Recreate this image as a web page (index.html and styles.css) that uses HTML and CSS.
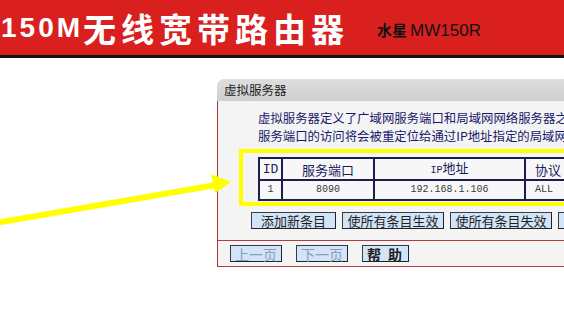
FILE: index.html
```html
<!DOCTYPE html>
<html lang="zh">
<head>
<meta charset="utf-8">
<title>虚拟服务器</title>
<link rel="stylesheet" href="styles.css">
</head>
<body>
<header class="banner">
  <h1 class="brand"><span class="brand-num">150M</span><span class="brand-cn">无线宽带路由器</span></h1>
  <div class="model"><span class="model-cn">水星</span> <span class="model-en">MW150R</span></div>
</header>

<section class="panel">
  <div class="panel-title">虚拟服务器</div>
  <div class="panel-body">
    <p class="desc">虚拟服务器定义了广域网服务端口和局域网网络服务器之间<br>服务端口的访问将会被重定位给通过IP地址指定的局域网网</p>
    <div class="highlight">
      <table class="rules">
        <colgroup>
          <col class="c-id"><col class="c-port"><col class="c-ip"><col class="c-proto">
        </colgroup>
        <tr>
          <th class="mono">ID</th>
          <th>服务端口</th>
          <th><span class="mono">IP</span>地址</th>
          <th>协议</th>
        </tr>
        <tr>
          <td class="mono">1</td>
          <td class="mono">8090</td>
          <td class="mono">192.168.1.106</td>
          <td class="mono">ALL</td>
        </tr>
      </table>
    </div>
    <div class="actions">
      <button class="btn w85">添加新条目</button>
      <button class="btn w102">使所有条目生效</button>
      <button class="btn w102">使所有条目失效</button>
      <button class="btn w102"></button>
    </div>
    <div class="nav">
      <button class="btn nav-btn disabled">上一页</button>
      <button class="btn nav-btn disabled">下一页</button>
      <button class="btn help">帮 助</button>
    </div>
  </div>
</section>

<svg class="arrow" width="564" height="317" viewBox="0 0 564 317">
  <line x1="-10" y1="224" x2="216" y2="185" stroke="#ffff00" stroke-width="6"/>
  <polygon points="211,174 231,182 215,193" fill="#ffff00"/>
</svg>
</body>
</html>
```

FILE: styles.css
```css
html, body {
  margin: 0;
  padding: 0;
}
body {
  width: 564px;
  height: 317px;
  overflow: hidden;
  position: relative;
  background: #ffffff;
  font-family: "Noto Sans CJK SC", "Liberation Sans", sans-serif;
}

.banner {
  height: 55px;
  background: #d9201f;
  border-bottom: 3px solid #111111;
  display: flex;
  align-items: center;
  white-space: nowrap;
}
.brand {
  margin: 0;
  padding-left: 1px;
  color: #ffffff;
  font-weight: bold;
  display: flex;
  align-items: center;
}
.brand-num {
  font-family: "Liberation Sans", sans-serif;
  font-size: 28px;
  letter-spacing: 3px;
  margin-right: 0;
}
.brand-cn {
  font-size: 33px;
  letter-spacing: 5px;
  line-height: 40px;
}
.model {
  margin-left: 28px;
  color: #111111;
  display: flex;
  align-items: baseline;
  padding-top: 4px;
}
.model-cn {
  font-size: 15px;
  font-weight: bold;
  margin-right: 3px;
}
.model-en {
  font-family: "Liberation Sans", sans-serif;
  font-size: 17px;
}

.panel {
  margin: 21px 0 0 217px;
  width: 347px;
  font-size: 12px;
  overflow: hidden;
}
.panel-title {
  height: 22px;
  line-height: 22px;
  padding-left: 7px;
  font-size: 12.5px;
  color: #1e1e1e;
  background: linear-gradient(#dedede, #cfcfcf);
  border-radius: 7px 0 0 0;
}
.panel-body {
  background: #f4f4f4;
  border-left: 1px solid #a93333;
  border-bottom: 1px solid #b23a3a;
}
.desc {
  margin: 0;
  padding: 8px 0 0 40px;
  line-height: 18px;
  font-size: 12.4px;
  color: #17176b;
  white-space: nowrap;
  overflow: hidden;
}
.highlight {
  margin: 4px 0 0 21px;
  border: 4px solid #ffff00;
  border-right: none;
  padding: 4px 0 1px 15px;
  overflow: hidden;
}
.rules {
  table-layout: fixed;
  width: 330px;
  border-collapse: separate;
  border-spacing: 0;
  border-top: 2px solid #1f1d4f;
  border-left: 2px solid #1f1d4f;
  background: #f7f7f7;
}
.c-id { width: 23px; }
.c-port { width: 92px; }
.c-ip { width: 151px; }
.c-proto { width: 62px; }
.rules th, .rules td {
  padding: 0;
  text-align: center;
  border-right: 2px solid #1f1d4f;
  border-bottom: 2px solid #1f1d4f;
  white-space: nowrap;
  overflow: hidden;
}
.rules th:last-child, .rules td:last-child {
  text-align: left;
  padding-left: 9px;
}
.rules th {
  height: 17px;
  line-height: 17px;
  font-weight: normal;
  font-size: 13px;
  color: #1b1b5c;
}
.rules td {
  height: 18px;
  line-height: 18px;
  color: #3a3a3a;
}
.mono {
  font-family: "Liberation Mono", monospace;
  font-size: 10px;
}
.rules td.mono { font-size: 10px; }

.actions {
  display: flex;
  gap: 6px;
  margin-top: 6px;
  padding-left: 33px;
  overflow: hidden;
}
.btn {
  height: 17px;
  padding: 0;
  margin: 0;
  font-family: "Noto Sans CJK SC", sans-serif;
  font-size: 13px;
  line-height: 14px;
  color: #1f1f1f;
  background: #d2e4f7;
  border: 1px solid #3b3b45;
  border-right-color: #22222a;
  border-bottom-color: #22222a;
  flex: none;
}
.w85 { width: 85px; }
.w102 { width: 102px; }

.nav {
  margin-top: 11px;
  border-top: 1px solid #b43c3c;
  padding: 4px 0 4px 12px;
  display: flex;
  gap: 14px;
}
.nav-btn { width: 52px; }
.disabled { color: #8d9db3; font-size: 14px; }
.help {
  width: 47px;
  font-size: 14px;
  font-weight: bold;
  letter-spacing: 2px;
}

.arrow {
  position: absolute;
  left: 0;
  top: 0;
  pointer-events: none;
}
```
